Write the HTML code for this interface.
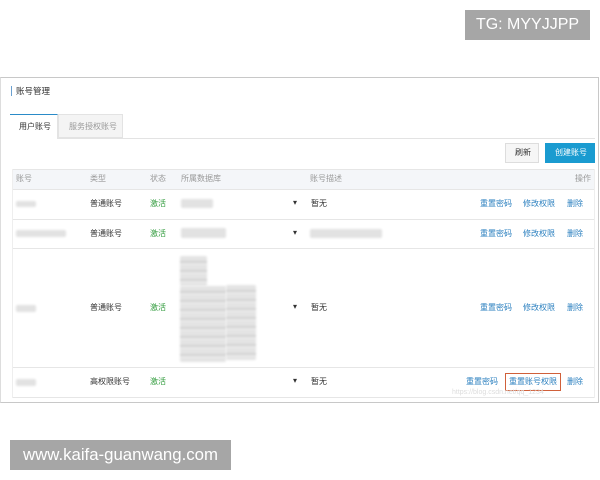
<!DOCTYPE html>
<html><head><meta charset="utf-8"><style>
*{margin:0;padding:0;box-sizing:border-box}
body{width:600px;height:480px;background:#fff;position:relative;overflow:hidden;font-family:"Liberation Sans","Noto Sans CJK SC",sans-serif;font-size:8px;color:#333}
.a{position:absolute}
.badge{background:#a6a6a6;color:#fff;font-size:16px;line-height:30px;text-align:center}
.frame{left:0;top:77px;width:599px;height:326px;border:1px solid #c8c8c8;border-left:1px solid #ddd}
.t{position:absolute;white-space:nowrap;line-height:10px}
.g{color:#999}
.grn{color:#2e9a3a}
.bl{color:#2a7fbf}
.blur{position:absolute;background:#e2e2e2;filter:blur(1px);border-radius:2px}
.hl{position:absolute;height:1px;background:#e6e6e6;left:12px;width:583px}
.str{background:repeating-linear-gradient(#e4e4e4 0 5px,#d2d2d2 5px 7px,#eaeaea 7px 9px)}
</style></head><body>
<div class="a badge" style="left:465px;top:10px;width:125px;height:30px">TG: MYYJJPP</div>
<div class="a badge" style="left:10px;top:440px;width:221px;height:30px;font-size:16.8px">www.kaifa-guanwang.com</div>
<div class="a frame"></div>
<div class="a" style="left:11px;top:86px;width:1px;height:10px;background:#6aa0d0"></div>
<div class="t" style="left:16px;top:86px;font-size:8.5px">账号管理</div>
<div class="a" style="left:10px;top:138px;width:585px;height:1px;background:#e3e3e3"></div>
<div class="a" style="left:10px;top:114px;width:48px;height:25px;background:#fff;border-top:1px solid #2a8bc8;border-right:1px solid #e3e3e3"></div>
<div class="a" style="left:58px;top:114px;width:65px;height:24px;background:#f4f4f4;border:1px solid #e3e3e3"></div>
<div class="t" style="left:19px;top:122px">用户账号</div>
<div class="t g" style="left:69px;top:122px">服务授权账号</div>
<div class="a" style="left:505px;top:143px;width:34px;height:20px;background:#f6f6f6;border:1px solid #ddd"></div>
<div class="t" style="left:515px;top:148px">刷新</div>
<div class="a" style="left:545px;top:143px;width:50px;height:20px;background:#1a9bd0"></div>
<div class="t" style="left:555px;top:148px;color:#fff">创建账号</div>
<div class="a" style="left:12px;top:169px;width:583px;height:20px;background:#f4f6f9;border-top:1px solid #e6e6e6"></div>
<div class="t g" style="left:16px;top:174px">账号</div>
<div class="t g" style="left:90px;top:174px">类型</div>
<div class="t g" style="left:150px;top:174px">状态</div>
<div class="t g" style="left:181px;top:174px">所属数据库</div>
<div class="t g" style="left:310px;top:174px">账号描述</div>
<div class="t g" style="left:575px;top:174px">操作</div>
<div class="hl" style="top:189px"></div>
<div class="hl" style="top:219px"></div>
<div class="hl" style="top:248px"></div>
<div class="hl" style="top:367px"></div>
<div class="hl" style="top:397px"></div>
<div class="a" style="left:12px;top:169px;width:1px;height:229px;background:#eee"></div>
<div class="a" style="left:594px;top:169px;width:1px;height:229px;background:#eee"></div>
<div class="blur" style="left:16px;top:201px;width:20px;height:6px"></div>
<div class="t" style="left:90px;top:199px">普通账号</div>
<div class="t grn" style="left:150px;top:199px">激活</div>
<div class="blur" style="left:181px;top:199px;width:32px;height:9px"></div>
<div class="t" style="left:293px;top:198px">▾</div>
<div class="t" style="left:311px;top:199px">暂无</div>
<div class="t bl" style="left:480px;top:199px">重置密码</div>
<div class="t bl" style="left:523px;top:199px">修改权限</div>
<div class="t bl" style="left:567px;top:199px">删除</div>
<div class="blur" style="left:16px;top:230px;width:50px;height:7px"></div>
<div class="t" style="left:90px;top:229px">普通账号</div>
<div class="t grn" style="left:150px;top:229px">激活</div>
<div class="blur" style="left:181px;top:228px;width:45px;height:10px"></div>
<div class="t" style="left:293px;top:228px">▾</div>
<div class="blur" style="left:310px;top:229px;width:72px;height:9px"></div>
<div class="t bl" style="left:480px;top:229px">重置密码</div>
<div class="t bl" style="left:523px;top:229px">修改权限</div>
<div class="t bl" style="left:567px;top:229px">删除</div>
<div class="blur" style="left:16px;top:305px;width:20px;height:7px"></div>
<div class="t" style="left:90px;top:303px">普通账号</div>
<div class="t grn" style="left:150px;top:303px">激活</div>
<div class="blur str" style="left:180px;top:256px;width:27px;height:30px"></div>
<div class="blur str" style="left:180px;top:286px;width:46px;height:76px"></div>
<div class="blur str" style="left:226px;top:285px;width:30px;height:75px"></div>
<div class="t" style="left:293px;top:302px">▾</div>
<div class="t" style="left:311px;top:303px">暂无</div>
<div class="t bl" style="left:480px;top:303px">重置密码</div>
<div class="t bl" style="left:523px;top:303px">修改权限</div>
<div class="t bl" style="left:567px;top:303px">删除</div>
<div class="blur" style="left:16px;top:379px;width:20px;height:7px"></div>
<div class="t" style="left:90px;top:377px">高权限账号</div>
<div class="t grn" style="left:150px;top:377px">激活</div>
<div class="t" style="left:293px;top:376px">▾</div>
<div class="t" style="left:311px;top:377px">暂无</div>
<div class="t bl" style="left:466px;top:377px">重置密码</div>
<div class="a" style="left:505px;top:373px;width:56px;height:18px;border:1.5px solid #d0603a"></div>
<div class="t bl" style="left:509px;top:377px">重置账号权限</div>
<div class="t bl" style="left:567px;top:377px">删除</div>
<div class="t" style="left:452px;top:388px;color:#ddd;font-size:7px">https://blog.csdn.net/qq_1234</div>
</body></html>
